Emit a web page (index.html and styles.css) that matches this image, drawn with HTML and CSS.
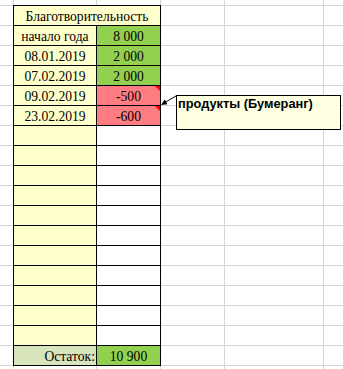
FILE: index.html
```html
<!DOCTYPE html>
<html lang="ru">
<head>
<meta charset="utf-8">
<link rel="stylesheet" href="styles.css">
</head>
<body>
<div class="sheet">
  <div class="table">
    <div class="c title">Благотворительность</div>
    <div class="c yl">начало года</div><div class="c gr">8 000</div>
    <div class="c yl">08.01.2019</div><div class="c gr">2 000</div>
    <div class="c yl">07.02.2019</div><div class="c gr">2 000</div>
    <div class="c yl">09.02.2019</div><div class="c rd flag">-500</div>
    <div class="c yl">23.02.2019</div><div class="c rd flag">-600</div>
    <div class="c yl"></div><div class="c"></div>
    <div class="c yl"></div><div class="c"></div>
    <div class="c yl"></div><div class="c"></div>
    <div class="c yl"></div><div class="c"></div>
    <div class="c yl"></div><div class="c"></div>
    <div class="c yl"></div><div class="c"></div>
    <div class="c yl"></div><div class="c"></div>
    <div class="c yl"></div><div class="c"></div>
    <div class="c yl"></div><div class="c"></div>
    <div class="c yl"></div><div class="c"></div>
    <div class="c yl"></div><div class="c"></div>
    <div class="c total">Остаток:</div><div class="c gr">10 900</div>
  </div>
  <svg class="arrow" width="25" height="20" viewBox="155 90 25 20">
    <line x1="176" y1="96" x2="164" y2="103" stroke="#000" stroke-width="1"/>
    <polygon points="161,105 164.6,99.6 167.4,104.2" fill="#000"/>
  </svg>
  <div class="note">продукты (Бумеранг)</div>
</div>
</body>
</html>
```
FILE: styles.css
```css
html, body {
  margin: 0;
  padding: 0;
  background: #fff;
}
.sheet {
  position: relative;
  width: 343px;
  height: 369px;
  overflow: hidden;
  box-sizing: border-box;
  padding: 5px 0 0 13px;
  background-image:
    linear-gradient(#d4d4d4, #d4d4d4),
    linear-gradient(#d4d4d4, #d4d4d4),
    linear-gradient(#d4d4d4, #d4d4d4),
    linear-gradient(#d4d4d4, #d4d4d4),
    linear-gradient(#d4d4d4, #d4d4d4),
    linear-gradient(to bottom, #d4d4d4 1px, transparent 1px);
  background-size: 1px 100%, 1px 100%, 1px 100%, 1px 100%, 1px 100%, 100% 20px;
  background-position: 13px 0, 96px 0, 160px 0, 224px 0, 323px 0, 0 5px;
  background-repeat: no-repeat, no-repeat, no-repeat, no-repeat, no-repeat, repeat;
}
.table {
  display: grid;
  grid-template-columns: 83px 64px;
  grid-auto-rows: 20px;
  width: max-content;
  border-top: 1px solid #000;
  border-left: 1px solid #000;
}
.c {
  position: relative;
  box-sizing: border-box;
  border-right: 1px solid #000;
  border-bottom: 1px solid #000;
  background: #fff;
  font-family: "Liberation Serif", "Times New Roman", serif;
  font-size: 13.6px;
  line-height: 19px;
  padding-top: 1px;
  text-align: center;
  white-space: nowrap;
  overflow: visible;
  color: #000;
}
.title {
  grid-column: span 2;
  background: #ffffcc;
}
.yl { background: #ffffcc; }
.gr { background: #92d050; }
.rd { background: #ff7c80; }
.total {
  background: #d8e4bc;
  text-align: right;
  padding-right: 1px;
}
.flag::after {
  content: "";
  position: absolute;
  top: 0;
  right: 0;
  border-top: 5px solid #ff0000;
  border-left: 5px solid transparent;
}
.arrow {
  position: absolute;
  left: 155px;
  top: 90px;
}
.note {
  position: absolute;
  left: 176px;
  top: 95px;
  width: 165px;
  height: 35px;
  box-sizing: border-box;
  border: 1px solid #000;
  background: #ffffe1;
  font-family: "Liberation Sans", Arial, sans-serif;
  font-weight: bold;
  font-size: 12.8px;
  line-height: 14px;
  padding: 1px 0 0 1px;
  color: #000;
  white-space: nowrap;
}
```
